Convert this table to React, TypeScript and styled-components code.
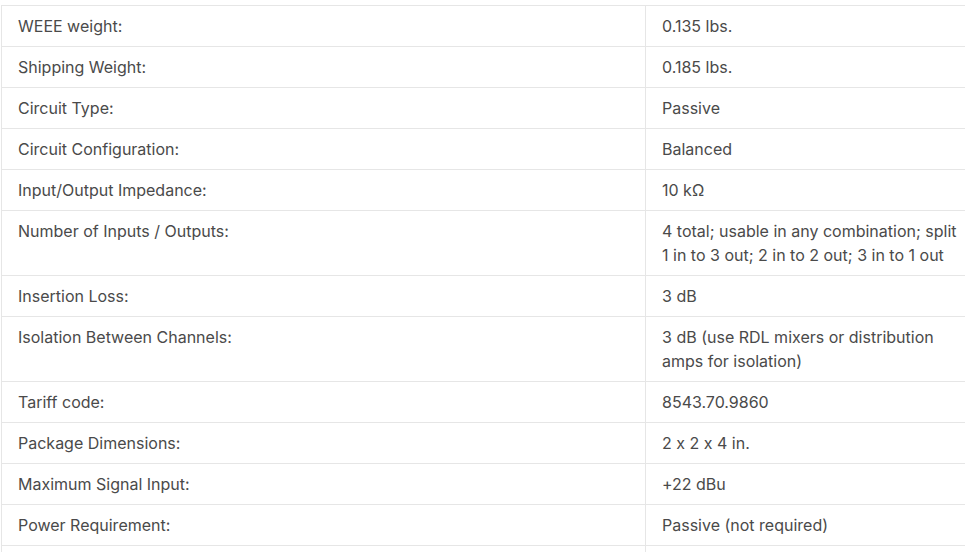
import styled, { createGlobalStyle } from 'styled-components'

const GlobalStyle = createGlobalStyle`
  body {
    margin: 0;
    background: #fff;
    font-family: Inter, "Noto Sans", sans-serif;
    overflow: hidden;
  }
`

const Wrapper = styled.div`
  padding: 5px 0 0 1px;
  width: 980px;
`

const SpecTable = styled.table`
  width: 980px;
  border-collapse: collapse;
  table-layout: fixed;
`

const LabelCol = styled.col`
  width: 644px;
`

const ValueCol = styled.col`
  width: 336px;
`

const Cell = styled.td`
  box-sizing: border-box;
  border: 1px solid #e6e6e6;
  padding: 8px 16px;
  height: 41px;
  font-size: 16px;
  line-height: 24px;
  font-feature-settings: 'calt' 0;
  color: #4a4a4a;
  vertical-align: top;
`

const specs: [string, string][] = [
  ['WEEE weight:', '0.135 lbs.'],
  ['Shipping Weight:', '0.185 lbs.'],
  ['Circuit Type:', 'Passive'],
  ['Circuit Configuration:', 'Balanced'],
  ['Input/Output Impedance:', '10 kΩ'],
  ['Number of Inputs / Outputs:', '4 total; usable in any combination; split 1 in to 3 out; 2 in to 2 out; 3 in to 1 out'],
  ['Insertion Loss:', '3 dB'],
  ['Isolation Between Channels:', '3 dB (use RDL mixers or distribution amps for isolation)'],
  ['Tariff code:', '8543.70.9860'],
  ['Package Dimensions:', '2 x 2 x 4 in.'],
  ['Maximum Signal Input:', '+22 dBu'],
  ['Power Requirement:', 'Passive (not required)'],
]

function App() {
  return (
    <Wrapper>
      <GlobalStyle />
      <SpecTable>
        <colgroup>
          <LabelCol />
          <ValueCol />
        </colgroup>
        <tbody>
          {specs.map(([label, value]) => (
            <tr key={label}>
              <Cell>{label}</Cell>
              <Cell>{value}</Cell>
            </tr>
          ))}
          <tr>
            <Cell />
            <Cell />
          </tr>
        </tbody>
      </SpecTable>
    </Wrapper>
  )
}

export default App
